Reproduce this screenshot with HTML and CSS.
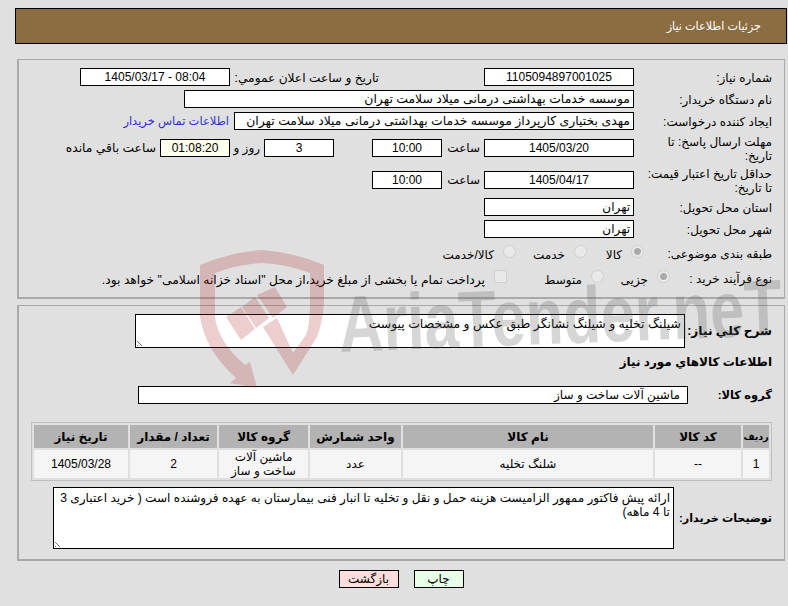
FILE: index.html
```html
<!DOCTYPE html>
<html lang="fa" dir="rtl">
<head>
<meta charset="utf-8">
<title>جزئیات اطلاعات نیاز</title>
<link rel="stylesheet" href="styles.css">
</head>
<body>
<div class="page">
  <header class="head">جزئیات اطلاعات نیاز</header>

  <section class="panel top">
    <div class="row r1">
      <div class="lbl">شماره نیاز:</div>
      <div class="box w150 ctr">1105094897001025</div>
      <div class="lbl2">تاریخ و ساعت اعلان عمومي:</div>
      <div class="box w150 ctr">08:04 - 1405/03/17</div>
    </div>
    <div class="row r2">
      <div class="lbl">نام دستگاه خریدار:</div>
      <div class="box w450 wide">موسسه خدمات بهداشتی درمانی میلاد سلامت تهران</div>
    </div>
    <div class="row r2">
      <div class="lbl">ایجاد کننده درخواست:</div>
      <div class="box w400 wide">مهدی بختیاری کارپرداز موسسه خدمات بهداشتی درمانی میلاد سلامت تهران</div>
      <a class="link">اطلاعات تماس خریدار</a>
    </div>
    <div class="row r4">
      <div class="lbl">مهلت ارسال پاسخ: تا تاریخ:</div>
      <div class="box w150 ctr">1405/03/20</div>
      <div class="t1">ساعت</div>
      <div class="box w70 ctr">10:00</div>
      <div class="box w70 ctr day">3</div>
      <div class="t2">روز و</div>
      <div class="box w70 ctr timer">01:08:20</div>
      <div class="t3">ساعت باقي مانده</div>
    </div>
    <div class="row r5">
      <div class="lbl">حداقل تاریخ اعتبار قیمت: تا تاریخ:</div>
      <div class="box w150 ctr">1405/04/17</div>
      <div class="t1">ساعت</div>
      <div class="box w70 ctr">10:00</div>
    </div>
    <div class="row r6">
      <div class="lbl">استان محل تحویل:</div>
      <div class="box w150">تهران</div>
    </div>
    <div class="row r2">
      <div class="lbl">شهر محل تحویل:</div>
      <div class="box w150">تهران</div>
    </div>
    <div class="row r8">
      <div class="lbl l8">طبقه بندی موضوعی:</div>
      <label class="opt o1"><input type="radio" name="cat" disabled checked>کالا</label>
      <label class="opt o2"><input type="radio" name="cat" disabled>خدمت</label>
      <label class="opt"><input type="radio" name="cat" disabled>کالا/خدمت</label>
    </div>
    <div class="row r9">
      <div class="lbl l9">نوع فرآیند خرید :</div>
      <label class="opt p1"><input type="radio" name="proc" disabled checked>جزیی</label>
      <label class="opt p2"><input type="radio" name="proc" disabled>متوسط</label>
      <label class="opt p3"><input type="checkbox" disabled>پرداخت تمام یا بخشی از مبلغ خرید،از محل "اسناد خزانه اسلامی" خواهد بود.</label>
    </div>
  </section>

  <section class="panel bottom">
    <div class="row-b">
      <div class="blbl lb-need">شرح کلي نیاز:</div>
      <div class="box area need wide">شیلنگ تخلیه و شیلنگ نشانگر طبق عکس و مشخصات پیوست<span class="grip"></span></div>
    </div>
    <div class="subhead">اطلاعات کالاهاي مورد نیاز</div>
    <div class="row-b group-row">
      <div class="blbl lb-group">گروه کالا:</div>
      <div class="box group">ماشین آلات ساخت و ساز</div>
    </div>
    <table class="items">
      <colgroup>
        <col class="c1"><col class="c2"><col class="c3"><col class="c4"><col class="c5"><col class="c6"><col class="c7">
      </colgroup>
      <thead>
        <tr><th class="th-small">ردیف</th><th>کد کالا</th><th>نام کالا</th><th>واحد شمارش</th><th>گروه کالا</th><th>تعداد / مقدار</th><th>تاریخ نیاز</th></tr>
      </thead>
      <tbody>
        <tr><td>1</td><td>--</td><td>شلنگ تخلیه</td><td>عدد</td><td>ماشین آلات ساخت و ساز</td><td>2</td><td>1405/03/28</td></tr>
      </tbody>
    </table>
    <div class="row-b note-row">
      <div class="blbl lb-note">توضیحات خریدار:</div>
      <div class="box area note">ارائه پیش فاکتور ممهور الزامیست هزینه حمل و نقل و تخلیه تا انبار فنی بیمارستان به عهده فروشنده است ( خرید اعتباری 3 تا 4 ماهه)<span class="grip"></span></div>
    </div>
  </section>

  <div class="actions">
    <button class="btn print">چاپ</button>
    <button class="btn back">بازگشت</button>
  </div>
</div>

<svg class="mark" viewBox="0 0 788 606" aria-hidden="true">
  <path class="shield" d="M200 265 Q231 252 262 250 Q293 252 324 265 V303 Q322 325 317 337 L293 375 L263 327 L277 318 L293 353 L306 335 Q310 325 310 303 V273 Q286 264 262 263 Q238 264 215 273 V317 Q218 342 245 365 L250 362 L257 388 L230 383 L236 378 Q205 350 200 317 Z"/>
  <polygon class="shield" points="226,317 241,307 255,329 241,340"/>
  <polygon class="shield" points="242,307 255,297 269,318 256,328"/>
  <polygon class="shield" points="257,295 275,287 287,307 273,318"/>
  <text class="mark-text" x="340" y="352" textLength="443" lengthAdjust="spacingAndGlyphs" transform="rotate(-2.2 340 352)">AriaTender.neT</text>
</svg>
</body>
</html>
```
FILE: styles.css
```css
* { box-sizing: border-box; }
html, body { margin: 0; padding: 0; }
body {
  position: relative;
  width: 788px;
  height: 606px;
  overflow: hidden;
  background: #e0e0e0;
  color: #000;
  font-family: "Liberation Sans", "DejaVu Sans", sans-serif;
  font-size: 12px;
  line-height: 14px;
}
.page { width: 772px; margin: 8px 1px 0 15px; padding: 0; }
.head {
  display: flex;
  align-items: center;
  height: 36px;
  padding-right: 25px;
  background: #8c6d42;
  border: 1px solid #000;
  color: #fff;
  font-size: 11.2px;
}
.panel { margin: 0 2px; border: 2px solid #a9a9a9; border-width: 1px 1px 2px 2px; }
.top { height: 240px; margin-top: 15px; padding: 8px 12px 0 0; }
.bottom { height: 256px; margin-top: 6px; padding: 8px 12px 0 13px; }

.row { display: flex; align-items: center; height: 18px; white-space: nowrap; }
.r2 { margin-top: 4px; }
.r4 { margin-top: 9px; }
.r5 { margin-top: 14px; }
.r6 { margin-top: 9px; }
.r8 { margin-top: 6px; }
.r9 { margin-top: 7px; }

.lbl { flex: 0 0 138px; padding-left: 12px; white-space: normal; padding-top: 2px; }
.l8 { flex-basis: 128px; padding-left: 0; }
.l9 { flex-basis: 102px; padding-left: 0; padding-top: 1px; }
.lbl2 { flex: 0 0 149px; margin-right: 105px; padding-top: 2px; font-size: 12.2px; white-space: nowrap; }

.box {
  height: 18px;
  padding: 0 3px;
  background: #fff;
  border: 1px solid #000;
  line-height: 16px;
  white-space: nowrap;
}
.wide { font-size: 12.4px; }
.w150 { flex: 0 0 150px; }
.w450 { flex: 0 0 450px; }
.w400 { flex: 0 0 400px; overflow: hidden; }
.w70 { flex: 0 0 70px; }
.ctr { text-align: center; }
.day { margin-right: 38px; }
.timer { background: #ffffee; }
.t1 { flex: 0 0 38px; margin-right: 4px; }
.t2 { flex: 0 0 30px; margin-right: 4px; }
.t3 { margin-right: 4px; font-size: 12.3px; }
.link { margin-right: 5px; color: #3333cc; font-size: 11.5px; }

.opt { display: flex; align-items: center; gap: 9px; padding-top: 3px; }
.o1 { flex: 0 0 57px; }
.o2 { flex: 0 0 71px; }
.p1 { flex: 0 0 66px; }
.p2 { flex: 0 0 97px; }
.p3 { font-size: 12.3px; }
.opt input {
  appearance: none;
  flex: 0 0 13px;
  width: 13px;
  height: 13px;
  margin: -7px 0 0;
  background: #e9e9e9;
  border: 1px solid #d0d0d0;
}
.opt input[type="radio"] { border-radius: 50%; }
.opt input[type="checkbox"] { border-radius: 2px; }
.opt input:checked { background: radial-gradient(circle, #aaa 0 3px, #e9e9e9 4px); }

.row-b { display: flex; }
.blbl { min-width: 0; font-weight: bold; align-self: center; white-space: nowrap; }
.lb-need { flex: 0 0 87px; font-size: 12.2px; }
.lb-group { flex: 0 0 84px; font-size: 11.5px; }
.lb-note { flex: 0 0 98px; font-size: 11.2px; }
.area { position: relative; white-space: normal; padding: 2px 3px; line-height: 14px; }
.need { flex: 0 0 550px; height: 34px; }
.note { flex: 0 0 621px; height: 62px; padding-top: 3px; font-size: 12.1px; }
.group { flex: 0 0 550px; padding-right: 7px; }
.grip {
  position: absolute;
  left: 1px;
  bottom: 1px;
  width: 8px;
  height: 8px;
  background: repeating-linear-gradient(45deg, #777 0 1px, transparent 1px 3px);
  clip-path: polygon(0 0, 100% 100%, 0 100%);
}
.subhead { margin-top: 7px; font-weight: bold; }
.group-row { margin-top: 17px; }

.items {
  width: 741px;
  margin-top: 18px;
  table-layout: fixed;
  border-collapse: separate;
  border-spacing: 2px;
  border: 1px solid #c0c0c0;
}
.c1 { width: 26px; }
.c2 { width: 86px; }
.c3 { width: 250px; }
.c4 { width: 91px; }
.c5 { width: 89px; }
.c6 { width: 87px; }
.c7 { width: 94px; }
.items th, .items td { padding: 0; text-align: center; }
.items th { height: 23px; background: #b3b3b3; }
.items .th-small { font-size: 9.5px; }
.items td { height: 28px; background: #f5f5f5; }
.note-row { margin-top: 6px; }

.actions { display: flex; justify-content: center; gap: 15px; margin-top: 9px; }
.btn {
  height: 18px;
  padding: 0;
  border: 1px solid #000;
  border-radius: 0;
  color: #000;
  font: inherit;
}
.print { width: 50px; background: #e6ffe6; }
.back { width: 60px; background: #ffdddd; }

.mark { position: absolute; inset: 0; width: 788px; height: 606px; pointer-events: none; direction: ltr; }
.shield { fill: rgb(175, 30, 30); fill-opacity: .22; }
.mark-text {
  fill: rgb(90, 90, 90);
  fill-opacity: .25;
  font-family: "Liberation Sans", sans-serif;
  font-size: 80px;
  font-weight: bold;
}
```
